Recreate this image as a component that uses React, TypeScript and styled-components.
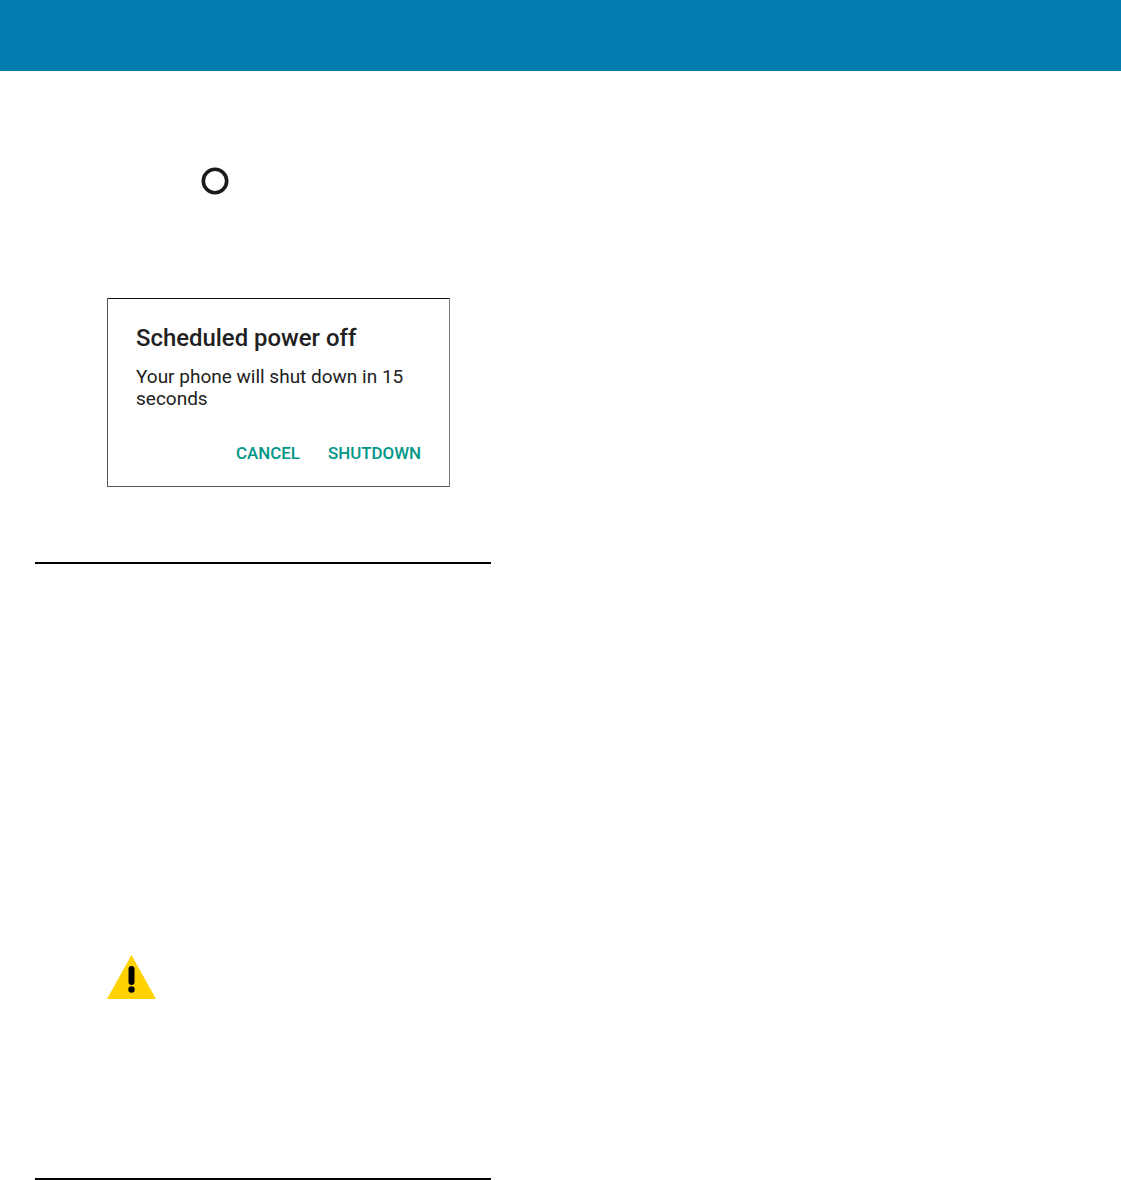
import styled, { createGlobalStyle } from "styled-components";

const Global = createGlobalStyle`
  html, body {
    margin: 0;
    padding: 0;
    background: #fff;
    font-family: Roboto, "Liberation Sans", sans-serif;
  }
`;

const Page = styled.div`
  width: 1121px;
  height: 1180px;
  overflow: hidden;
  background: #fff;
`;

const Banner = styled.header`
  height: 71px;
  background: #007cb0;
`;

const Column = styled.main`
  width: 456px;
  margin-left: 35px;
  display: flex;
  flex-direction: column;
`;

const PowerIcon = styled.svg`
  display: block;
  width: 28px;
  height: 28px;
  margin: 96px 0 0 166px;
`;

/* Dialog screenshot */
const Dialog = styled.section`
  box-sizing: border-box;
  width: 343px;
  height: 189px;
  margin: 103px 0 0 72px;
  padding: 24px 28px 0 28px;
  background: #fff;
  border: 1px solid #555;
  border-top-color: #111;
  border-right-color: #777;
  border-radius: 1px;
  display: flex;
  flex-direction: column;
`;

const DialogTitle = styled.h2`
  margin: 0;
  font-size: 23.9px;
  font-weight: 500;
  line-height: 30px;
  color: #212121;
`;

const DialogBody = styled.p`
  margin: 13px 0 0;
  font-size: 19px;
  font-weight: 400;
  line-height: 22px;
  color: #212121;
`;

const DialogActions = styled.div`
  display: flex;
  justify-content: flex-end;
  gap: 28px;
  margin-top: 33px;
`;

const ActionButton = styled.span`
  font-size: 16.9px;
  font-weight: 500;
  line-height: 20px;
  color: #009688;
`;

const Rule = styled.hr<{ $top: number }>`
  width: 100%;
  height: 2px;
  margin: ${({ $top }) => $top}px 0 0;
  border: 0;
  background: #000;
`;

const WarningIcon = styled.svg`
  display: block;
  width: 49px;
  height: 44px;
  margin: 391px 0 0 72px;
`;

export default function App() {
  return (
    <Page>
      <Global />
      <Banner />
      <Column>
        <PowerIcon viewBox="0 0 28 28" aria-hidden="true">
          <circle cx="14" cy="14" r="11.7" fill="none" stroke="#1a1a1a" strokeWidth="3.6" />
        </PowerIcon>
        <Dialog>
          <DialogTitle>Scheduled power off</DialogTitle>
          <DialogBody>Your phone will shut down in 15 seconds</DialogBody>
          <DialogActions>
            <ActionButton>CANCEL</ActionButton>
            <ActionButton>SHUTDOWN</ActionButton>
          </DialogActions>
        </Dialog>
        <Rule $top={75} />
        <WarningIcon viewBox="0 0 49 44" aria-hidden="true">
          <path d="M24.5 0 L49 44 H0 Z" fill="#ffd200" />
          <path d="M24.5 14 L24.5 27" stroke="#000" strokeWidth="6" strokeLinecap="round" />
          <circle cx="24.5" cy="34.5" r="3.2" fill="#000" />
        </WarningIcon>
        <Rule $top={179} />
      </Column>
    </Page>
  );
}
